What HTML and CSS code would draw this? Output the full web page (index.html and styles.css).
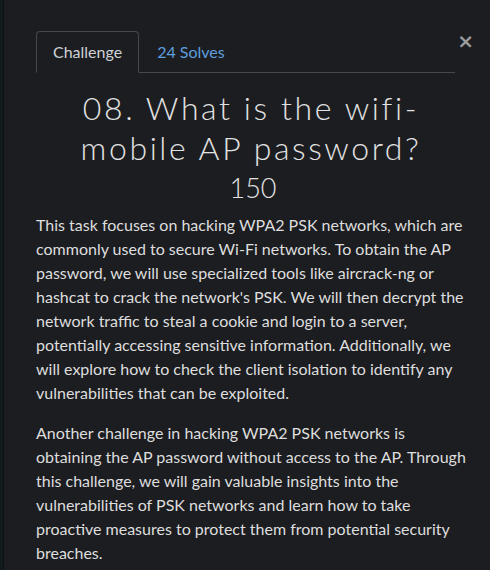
FILE: index.html
```html
<!DOCTYPE html>
<html>
<head>
<meta charset="utf-8">
<link rel="stylesheet" href="styles.css">
</head>
<body>
<div class="edge"></div>
<div class="modal">
  <div class="nav-row">
    <ul class="tabs">
      <li class="tab active">Challenge</li>
      <li class="tab link">24 Solves</li>
    </ul>
    <span class="close">&times;</span>
  </div>
  <h2 class="title">08. What is the wifi-mobile AP password?</h2>
  <h3 class="points">150</h3>
  <div class="desc">
    <p>This task focuses on hacking WPA2 PSK networks, which are commonly used to secure Wi-Fi networks. To obtain the AP password, we will use specialized tools like aircrack-ng or hashcat to crack the network's PSK. We will then decrypt the network traffic to steal a cookie and login to a server, potentially accessing sensitive information. Additionally, we will explore how to check the client isolation to identify any vulnerabilities that can be exploited.</p>
    <p>Another challenge in hacking WPA2 PSK networks is obtaining the AP password without access to the AP. Through this challenge, we will gain valuable insights into the vulnerabilities of PSK networks and learn how to take proactive measures to protect them from potential security breaches.</p>
  </div>
</div>
</body>
</html>
```
FILE: styles.css
```css
html, body {
  margin: 0;
  padding: 0;
  background: #1c1d20;
  height: 100%;
  overflow: hidden;
}
body {
  display: flex;
  font-family: Lato, "Liberation Sans", sans-serif;
  color: #dcdcdc;
}
.edge {
  width: 3px;
  background: #111a1c;
  border-right: 1px solid #0f1012;
  flex: none;
}
.modal {
  flex: 1;
  padding: 31px 16px 0 32px;
}
.nav-row {
  display: flex;
  align-items: flex-start;
}
.tabs {
  list-style: none;
  margin: 0;
  padding: 0;
  display: flex;
  flex: none;
  width: 419px;
  border-bottom: 1px solid #46474a;
}
.tab {
  font-size: 16px;
  line-height: 22px;
  padding: 9px 16px 9px 16px;
  border: 1px solid transparent;
  border-top-left-radius: 4px;
  border-top-right-radius: 4px;
  margin-bottom: -1px;
}
.tab.active {
  border-color: #46474a;
  border-bottom-color: #1c1d20;
  color: #cfd2d6;
}
.tab.link {
  color: #5e9fdf;
  padding-left: 17px;
}
.close {
  margin-left: auto;
  margin-top: -1px;
  margin-right: 0;
  font-family: "DejaVu Sans", sans-serif;
  font-weight: bold;
  font-size: 20px;
  line-height: 22px;
  color: #9a9b9d;
}
.title {
  margin: 15px 0 0 0;
  text-align: center;
  font-family: Lato, sans-serif;
  font-weight: 300;
  font-size: 32px;
  line-height: 40px;
  letter-spacing: 2.6px;
  color: #e2e2e2;
  padding: 0 20px 0 12px;
}
.points {
  margin: 2px 0 7px 0;
  text-align: center;
  font-weight: 300;
  font-size: 27px;
  line-height: 36px;
  color: #e2e2e2;
  padding-right: 4px;
}
.desc p {
  margin: 0 0 16px 0;
  font-size: 16px;
  line-height: 24px;
  color: #dedede;
}
```
